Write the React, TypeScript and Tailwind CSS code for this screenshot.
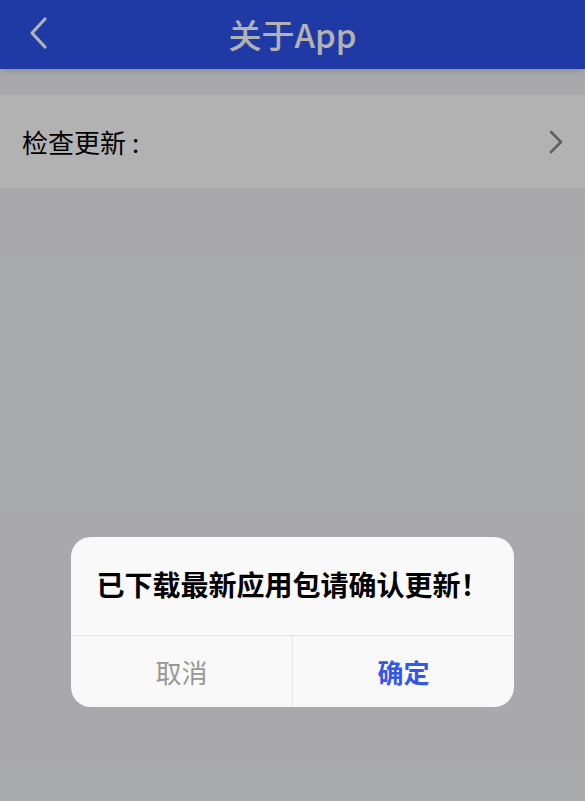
import React, { useState } from 'react';

const font = { fontFamily: '"Noto Sans CJK SC", "Noto Sans", sans-serif' };

const ChevronLeft = () => (
  <svg width="22" height="34" viewBox="0 0 22 34" fill="none">
    <path d="M18 3 L5 17 L18 31" stroke="currentColor" strokeWidth="3.2" strokeLinecap="round" strokeLinejoin="round" />
  </svg>
);

const ChevronRight = () => (
  <svg width="16" height="26" viewBox="0 0 16 26" fill="none">
    <path d="M3 3 L13 13 L3 23" stroke="currentColor" strokeWidth="2.6" strokeLinecap="round" strokeLinejoin="round" />
  </svg>
);

export default function App() {
  const [open, setOpen] = useState(true);

  return (
    <div className="relative h-[801px] w-[585px] overflow-hidden bg-[#f2f3f5]" style={font}>
      {/* Header */}
      <div className="relative flex h-[69px] items-center justify-center bg-[#2e53ed] shadow-md">
        <button className="absolute left-[27px] top-[16px] text-white">
          <ChevronLeft />
        </button>
        <h1 className="text-[33px] font-medium leading-none text-white">关于App</h1>
      </div>

      <div className="pt-[26px]">
        <div className="flex h-[93px] items-center justify-between bg-white pl-[22px] pr-[21px]">
          <span className="text-[26px] text-black">
            检查更新<span className="ml-[6px]">:</span>
          </span>
          <span className="text-[#8a8a8a]">
            <ChevronRight />
          </span>
        </div>
      </div>

      {/* Dialog */}
      {open && (
        <div className="absolute inset-0 bg-black/30">
          <div className="absolute left-[71px] top-[537px] w-[443px] overflow-hidden rounded-[20px] bg-[#f9f9f9]">
            <div className="flex h-[98px] items-center justify-center pb-[4px]">
              <p className="whitespace-nowrap text-[28px] font-bold leading-none text-black">已下载最新应用包请确认更新！</p>
            </div>
            <div className="flex h-[72px] border-t border-[#e3e3e3]">
              <button
                onClick={() => setOpen(false)}
                className="flex-1 border-r border-[#e3e3e3] text-[26px] text-[#979797]"
              >
                取消
              </button>
              <button
                onClick={() => setOpen(false)}
                className="flex-1 text-[26px] font-bold text-[#3358e8]"
              >
                确定
              </button>
            </div>
          </div>
        </div>
      )}
    </div>
  );
}
